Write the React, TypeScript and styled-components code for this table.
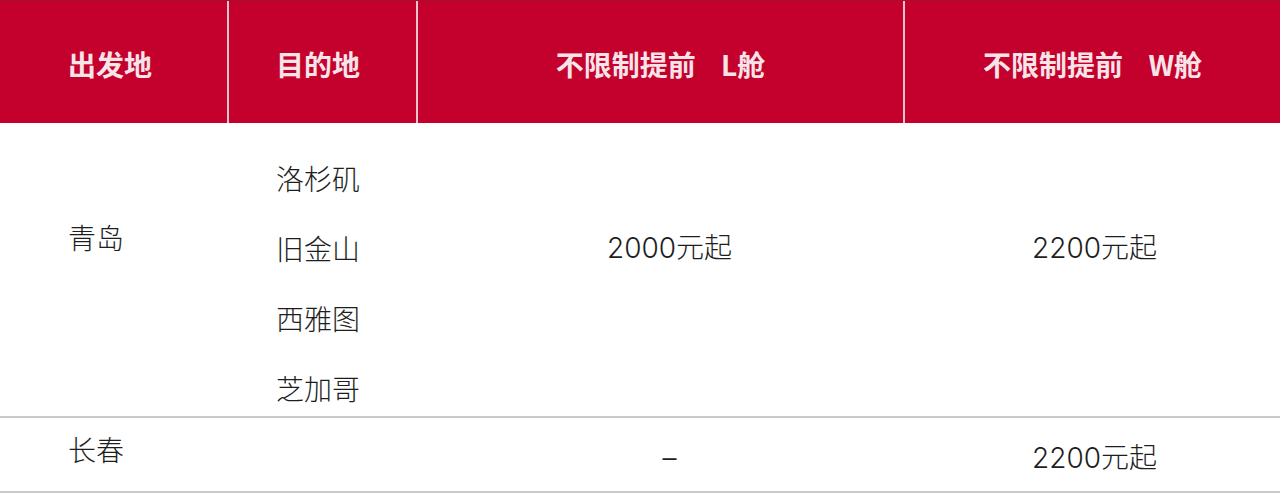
import styled, { createGlobalStyle } from "styled-components";

const GlobalStyle = createGlobalStyle`
  html, body {
    margin: 0;
    padding: 0;
    background: #ffffff;
  }
  body {
    font-family: "Noto Sans CJK SC", "Noto Sans", sans-serif;
  }
`;

const COLUMNS = "227px 189px 487px 377px";

const Table = styled.div`
  width: 1280px;
  height: 498px;
  overflow: hidden;
  background: #fff;
`;

const HeaderRow = styled.div`
  display: grid;
  grid-template-columns: ${COLUMNS};
  height: 123px;
  background: #c4002d;
  border-top: 1px solid #a3102f;
  box-sizing: border-box;
`;

const HeadCell = styled.div<{ $align?: "left" | "center"; $pad?: number; $divider?: boolean }>`
  display: flex;
  align-items: center;
  justify-content: ${(p) => (p.$align === "left" ? "flex-start" : "center")};
  padding-left: ${(p) => p.$pad ?? 0}px;
  padding-top: 4px;
  box-sizing: border-box;
  border-left: ${(p) => (p.$divider ? "2px solid #ecc3cd" : "none")};
  color: #f7e4e8;
  font-size: 28px;
  font-weight: 700;
  white-space: pre;
`;

const BodyRow = styled.div<{ $height: number; $top?: boolean }>`
  display: grid;
  grid-template-columns: ${COLUMNS};
  height: ${(p) => p.$height}px;
  box-sizing: border-box;
  border-top: ${(p) => (p.$top ? "2px solid #c9c9c9" : "none")};
`;

const Cell = styled.div<{ $pad?: number; $top: number; $center?: boolean; $shift?: number }>`
  padding-top: ${(p) => p.$top}px;
  padding-left: ${(p) => p.$pad ?? 0}px;
  box-sizing: border-box;
  text-align: ${(p) => (p.$center ? "center" : "left")};
  color: #1e1e1e;
  font-family: "Inter", "Noto Sans CJK SC", sans-serif;
  font-size: 28px;
  font-weight: 300;
  line-height: 36px;
  ${(p) => (p.$shift ? `transform: translateX(${p.$shift}px);` : "")}
`;

const CityList = styled.div`
  display: flex;
  flex-direction: column;
  gap: 34px;
`;

const BottomLine = styled.div`
  height: 2px;
  background: #c9c9c9;
`;

const cities = ["洛杉矶", "旧金山", "西雅图", "芝加哥"];

export default function App() {
  return (
    <>
      <GlobalStyle />
      <Table>
        <HeaderRow>
          <HeadCell $align="left" $pad={68}>出发地</HeadCell>
          <HeadCell $align="left" $pad={47} $divider>目的地</HeadCell>
          <HeadCell $divider>{"不限制提前    L舱"}</HeadCell>
          <HeadCell $divider>{"不限制提前    W舱"}</HeadCell>
        </HeaderRow>
        <BodyRow $height={293}>
          <Cell $pad={68} $top={98}>青岛</Cell>
          <Cell $pad={49} $top={39}>
            <CityList>
              {cities.map((c) => (
                <div key={c}>{c}</div>
              ))}
            </CityList>
          </Cell>
          <Cell $center $top={107} $shift={10}>2000元起</Cell>
          <Cell $center $top={107} $shift={3}>2200元起</Cell>
        </BodyRow>
        <BodyRow $height={75} $top>
          <Cell $pad={68} $top={15}>长春</Cell>
          <Cell $top={0} />
          <Cell $center $top={22} $shift={10}>–</Cell>
          <Cell $center $top={22} $shift={3}>2200元起</Cell>
        </BodyRow>
        <BottomLine />
      </Table>
    </>
  );
}
